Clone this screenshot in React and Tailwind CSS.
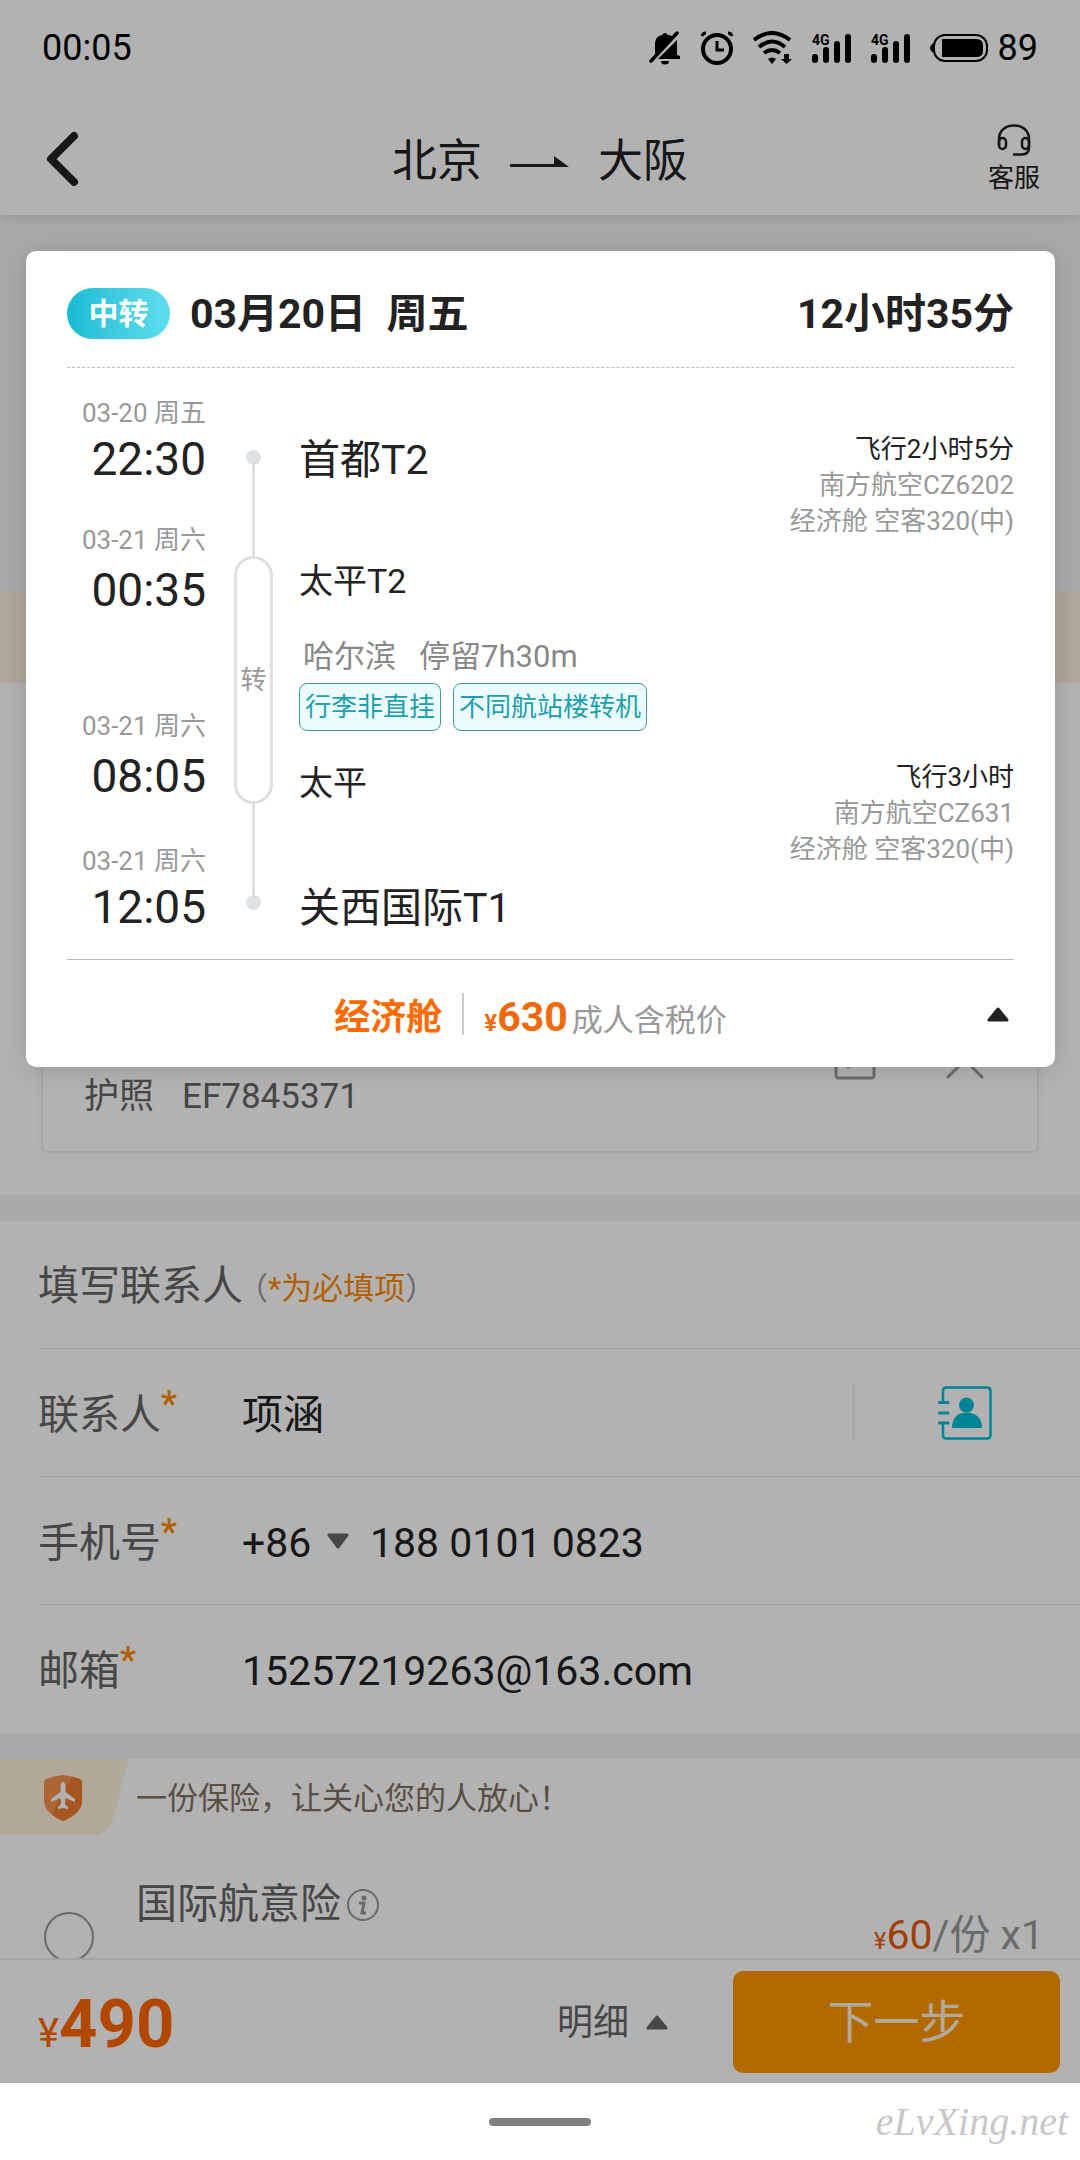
import React from "react";

function BellOff() {
  return (
    <svg width="32" height="34" viewBox="0 0 32 34" className="shrink-0">
      <path d="M6 23 V14 C6 7 9 5 13 4 Q16 0 19 4 Q22 4 24 6 Z" fill="#000" />
      <path d="M12 25 L28 9 V24 L31 25 V28 H9 Z" fill="#000" />
      <path d="M12 30 H20 A4 3.500 0 0 1 12 30 Z" fill="#000" />
      <path d="M2 30 L28 2" stroke="#000" strokeWidth="3.500" strokeLinecap="round" />
    </svg>
  );
}

function Alarm() {
  return (
    <svg width="34" height="34" viewBox="0 0 34 34" fill="none" stroke="#000" className="shrink-0">
      <circle cx="17" cy="18" r="14" strokeWidth="4" />
      <path d="M17 10 V19 H24" strokeWidth="3" />
      <path d="M2 5 Q3 2 6 2 M28 2 Q31 2 32 5" strokeWidth="3" />
    </svg>
  );
}

function Wifi() {
  return (
    <svg width="40" height="34" viewBox="0 0 40 34" fill="none" stroke="#000" className="shrink-0">
      <path d="M1 9 Q19 -5 37 9" strokeWidth="4" />
      <path d="M6 16 Q19 5 32 16" strokeWidth="4" />
      <path d="M11 22 Q19 16 27 22" strokeWidth="4" />
      <path d="M19 33 L15 28 Q19 25 23 28 Z" fill="#000" stroke="none" />
      <path d="M31 23 H36 V28 H39 L33.500 33 L28 28 H31 Z" fill="#000" stroke="none" />
    </svg>
  );
}

function Signal() {
  return (
    <svg width="40" height="34" viewBox="0 0 40 34" className="shrink-0">
      <text x="0" y="14" fontSize="14" fontWeight="700" fontFamily="Roboto, sans-serif">4G</text>
      <rect x="0" y="23" width="6" height="9" rx="3" />
      <rect x="11" y="16" width="6" height="16" rx="3" />
      <rect x="22" y="10" width="6" height="22" rx="3" />
      <rect x="33" y="3" width="6" height="29" rx="3" />
    </svg>
  );
}

function Battery() {
  return (
    <svg width="58" height="28" viewBox="0 0 58 28" className="shrink-0">
      <path d="M5 8 Q0 11 0 14 Q0 17 5 20 Z" />
      <rect x="4" y="1" width="53" height="26" rx="11" fill="none" stroke="#000" strokeWidth="2" />
      <path d="M12 5 H46 Q53 5 53 11 V17 Q53 23 46 23 H12 Z" />
    </svg>
  );
}

function Triangle({ down, className }) {
  return (
    <svg width="24" height="16" viewBox="0 0 24 16" className={className}>
      <path
        d={down ? "M3 2 H21 L12 14 Z" : "M3 14 H21 L12 3 Z"}
        fill="currentColor"
        stroke="currentColor"
        strokeWidth="3"
        strokeLinejoin="round"
      />
    </svg>
  );
}

function Headset() {
  return (
    <svg width="34" height="32" viewBox="0 0 34 32" fill="none" stroke="#222" strokeWidth="2.500">
      <path d="M2 21 V15 C2 7 8 1.500 17 1.500 C26 1.500 32 7 32 15 V23 Q32 30.500 25 30.500 H16" />
      <rect x="2" y="14" width="7" height="11" rx="3.500" />
      <rect x="25" y="14" width="7" height="11" rx="3.500" />
    </svg>
  );
}

function AddressBook() {
  return (
    <svg width="54" height="54" viewBox="0 0 54 54" fill="none" stroke="#00bcd4" strokeWidth="2.500" strokeLinecap="round">
      <path d="M5 16 V5 Q5 1.500 8 1.500 H49 Q52.500 1.500 52.500 5 V49 Q52.500 52.500 49 52.500 H8 Q5 52.500 5 49 V38" />
      <path d="M1.500 16.500 H10 M1.500 27 H10 M1.500 37 H10" strokeWidth="3" />
      <circle cx="28.500" cy="19" r="7.500" fill="#00bcd4" stroke="none" />
      <path d="M14 42 C14 31 20 26.500 28.500 26.500 C37 26.500 44 31 44 42 Z" fill="#00bcd4" stroke="none" />
    </svg>
  );
}

function Shield() {
  return (
    <svg width="38" height="46" viewBox="0 0 38 46" className="absolute left-11 top-4">
      <path d="M19 0 Q28 1 36 4 Q38 5 38 8 V26 Q38 38 19 46 Q0 38 0 26 V8 Q0 5 2 4 Q10 1 19 0 Z" fill="#f7924c" />
      <path d="M28 2 L36 4 Q38 5 38 8 V26 Q38 38 19 46 Q12 43 8 39 Z" fill="#ee7b30" />
      <path d="M19 7 Q21 7 21.500 11 V17 L31 24 V27 L21.500 23 L21 29 L24 32 V34 L19 33 L14 34 V32 L17 29 L16.500 23 L7 27 V24 L16.500 17 V11 Q17 7 19 7 Z" fill="#fff" />
    </svg>
  );
}

function Stop({ date, time, className, spaced }) {
  return (
    <div className={"flex flex-col items-end " + className}>
      <span className="text-[26px] leading-9 text-[#999]">{date}</span>
      <time className={"text-[46px] leading-14 " + (spaced ? "mt-1" : "")}>{time}</time>
    </div>
  );
}

function FlightInfo({ duration, flight, cabin }) {
  return (
    <div className="text-right text-[26px] leading-9 text-[#999]">
      <p className="text-[#222]">{duration}</p>
      <p>{flight}</p>
      <p>{cabin}</p>
    </div>
  );
}

function Chip({ children }) {
  return (
    <span className="flex h-12 items-center rounded-lg border border-[#3f9ca4] bg-[#ecfbfe] px-[5px] text-[26px] text-[#1fa0ad]">
      {children}
    </span>
  );
}

function TripCard() {
  return (
    <section
      role="dialog"
      aria-label="行程详情"
      className="absolute left-[26px] right-[25px] top-[251px] rounded-[10px] bg-white px-[41px] text-[#222] shadow-[0_2px_24px_rgba(0,0,0,0.14)]"
    >
      <header className="flex h-[117px] items-center border-b border-dashed border-[#bbb] pt-2">
        <span className="flex h-[51px] w-[103px] items-center justify-center rounded-full bg-linear-to-r from-[#14bcd3] to-[#5edcee] text-[30px] font-bold text-white">
          中转
        </span>
        <h2 className="ml-5 whitespace-pre pt-1 text-[41px] font-bold">03月20日  周五</h2>
        <span className="ml-auto pt-1 text-[41px] font-bold">12小时35分</span>
      </header>

      <div className="flex border-b border-[#bbb] pb-6">
        <div className="w-[139px] pt-[27px]">
          <Stop date="03-20 周五" time="22:30" className="" />
          <Stop date="03-21 周六" time="00:35" className="mt-[35px]" spaced />
          <Stop date="03-21 周六" time="08:05" className="mt-[90px]" spaced />
          <Stop date="03-21 周六" time="12:05" className="mt-[39px]" />
        </div>

        <div className="ml-7 flex w-[39px] flex-col items-center pt-[82px]">
          <i className="size-[15px] rounded-full bg-[#dde1e3]" />
          <i className="h-[91px] w-[3px] bg-[#dde1e3]" />
          <span className="flex h-[248px] w-[39px] items-center justify-center rounded-full border-[3px] border-[#dde1e3] text-[26px] text-[#999]">
            转
          </span>
          <i className="h-[91px] w-[3px] bg-[#dde1e3]" />
          <i className="size-[15px] rounded-full bg-[#dde1e3]" />
        </div>

        <div className="ml-[26px] flex-1 pt-[63px]">
          <div className="flex justify-between">
            <div>
              <p className="mt-1 text-[41px] leading-[50px]">首都T2</p>
              <p className="mt-[74px] text-[34px] leading-[44px]">太平T2</p>
            </div>
            <FlightInfo duration="飞行2小时5分" flight="南方航空CZ6202" cabin="经济舱 空客320(中)" />
          </div>
          <p className="mt-[34px] whitespace-pre pl-1 text-[31px] leading-10 text-[#888]">哈尔滨   停留7h30m</p>
          <div className="mt-1.5 flex gap-3">
            <Chip>行李非直挂</Chip>
            <Chip>不同航站楼转机</Chip>
          </div>
          <div className="mt-7 flex justify-between">
            <div>
              <p className="mt-0.5 text-[34px] leading-[44px]">太平</p>
              <p className="mt-[78px] text-[41px] leading-[50px]">关西国际T1</p>
            </div>
            <FlightInfo duration="飞行3小时" flight="南方航空CZ631" cabin="经济舱 空客320(中)" />
          </div>
        </div>
      </div>

      <footer className="relative flex h-[107px] items-center justify-center">
        <div className="mr-5 flex items-center">
          <span className="pt-2 text-4xl font-bold text-[#ff6a00]">经济舱</span>
          <i className="mx-5 h-[42px] w-0.5 bg-[#ccc]" />
          <p className="flex items-baseline pt-2 text-[31px] text-[#999]">
            <span className="text-2xl font-bold text-[#f0690f]">¥</span>
            <strong className="mr-1 text-[41px] text-[#f0690f]">630</strong>
            成人含税价
          </p>
        </div>
        <button type="button" aria-label="收起" className="absolute right-1 flex h-12 items-center">
          <Triangle className="text-[#222]" />
        </button>
      </footer>
    </section>
  );
}

function FormRow({ id, label, children, last }) {
  return (
    <div className={"ml-[38px] flex h-32 items-center text-[41px] " + (last ? "" : "border-b border-[#ebebeb]")}>
      <label htmlFor={id} className="flex w-[204px] items-center pt-1.5 text-[#666]">
        {label}
        <span className="-mt-6 text-4xl font-medium leading-10 text-[#ff8a00]">*</span>
      </label>
      {children}
    </div>
  );
}

export default function App() {
  return (
    <div
      className="flex min-h-screen w-full flex-col bg-white text-[#222]"
      style={{ fontFamily: 'Roboto, "Noto Sans CJK SC", sans-serif' }}
    >
      <div className="relative">
        <header className="relative h-[215px] shadow-[0_2px_14px_rgba(0,0,0,0.12)]">
          <div className="flex h-24 items-center px-[42px] text-4xl text-black">
            <span>00:05</span>
            <div className="ml-auto flex items-center gap-[19px]">
              <BellOff />
              <Alarm />
              <Wifi />
              <Signal />
              <Signal />
              <div className="flex items-center gap-2.5">
                <Battery />
                <span>89</span>
              </div>
            </div>
          </div>
          <div className="flex h-[119px] items-center justify-between px-10 pt-1.5">
            <button type="button" aria-label="返回" className="w-[52px]">
              <svg width="44" height="60" viewBox="0 0 44 60" fill="none" stroke="#222" strokeWidth="8" strokeLinecap="round" strokeLinejoin="round">
                <path d="M34 7 L11 30 L34 53" />
              </svg>
            </button>
            <h1 className="flex items-center pt-1.5 text-[45px]">
              北京
              <svg width="60" height="12" viewBox="0 0 60 12" className="mx-7">
                <path d="M0 8 H44 V0 L59 11 H0 Z" fill="#222" />
              </svg>
              大阪
            </h1>
            <button type="button" className="flex w-[52px] flex-col items-center gap-1.5 text-[26px] leading-8">
              <Headset />
              <span className="whitespace-nowrap">客服</span>
            </button>
          </div>
        </header>

        <div className="h-[376px] bg-[#f3f3f3]" />
        <div className="h-[92px] bg-[#fdeedb]" />

        <section className="px-[41px] pb-[42px] pt-6">
          <div className="h-[446px] rounded-lg border-2 border-t-0 border-[#ededed] px-[41px] pt-[330px] shadow-[0_4px_12px_rgba(0,0,0,0.04)]">
            <div className="flex justify-between text-[#666]">
              <p className="pt-[38px] text-[35px] leading-[44px]">
                护照<span className="ml-7">EF7845371</span>
              </p>
              <div className="flex h-[44px] items-center gap-[70px] pr-3">
                <button type="button" aria-label="编辑">
                  <svg width="42" height="42" viewBox="0 0 42 42" fill="none" stroke="#999" strokeWidth="3" strokeLinecap="round">
                    <path d="M24 2 H5 Q2 2 2 5 V37 Q2 40 5 40 H37 Q40 40 40 37 V18 M14 29 L36 6" />
                  </svg>
                </button>
                <button type="button" aria-label="删除">
                  <svg width="38" height="42" viewBox="0 0 38 42" fill="none" stroke="#999" strokeWidth="3" strokeLinecap="round">
                    <path d="M2 5 L36 39 M36 5 L2 39" />
                  </svg>
                </button>
              </div>
            </div>
          </div>
        </section>

        <div className="h-[26px] bg-[#f3f3f3]" />

        <form>
          <h2 className="ml-[38px] flex h-32 items-center border-b border-[#ebebeb] pt-1 text-[41px] text-[#666]">
            填写联系人
            <span className="-ml-1.5 pt-1.5 text-[31px] text-[#999]">
              （<span className="text-[#ff8a00]">*为必填项</span>）
            </span>
          </h2>
          <FormRow id="contact" label="联系人">
            <input id="contact" defaultValue="项涵" className="w-0 flex-1 pt-1.5 outline-none" />
            <i className="h-[57px] w-[3px] bg-[#ededed]" />
            <button type="button" aria-label="通讯录" className="ml-[83px] mr-[88px]">
              <AddressBook />
            </button>
          </FormRow>
          <FormRow id="phone" label="手机号">
            <span className="relative mr-5 flex items-center">
              <select aria-label="国家代码" className="w-[108px] appearance-none bg-transparent pt-1.5 outline-none">
                <option>+86</option>
              </select>
              <Triangle down className="pointer-events-none absolute right-0 text-[#666]" />
            </span>
            <input id="phone" type="tel" defaultValue="188 0101 0823" className="w-0 flex-1 pt-1.5 outline-none" />
          </FormRow>
          <FormRow id="email" label="邮箱" last>
            <input id="email" type="email" defaultValue="15257219263@163.com" className="w-0 flex-1 pt-1.5 outline-none" />
          </FormRow>
        </form>

        <div className="h-[26px] bg-[#f3f3f3]" />

        <section className="h-[199px] overflow-hidden">
          <div className="relative flex h-[76px] items-center">
            <svg width="128" height="76" viewBox="0 0 128 76" className="shrink-0">
              <path d="M0 0 H128 L114 56 Q109 76 94 76 H0 Z" fill="#fff1d8" />
            </svg>
            <Shield />
            <p className="ml-2 pt-1 text-[31px] text-[#82705f]">一份保险，让关心您的人放心！</p>
          </div>
          <div className="flex items-start pl-11 pr-9 pt-9">
            <input
              type="radio"
              aria-label="国际航意险"
              className="mt-[41px] size-[50px] shrink-0 appearance-none rounded-full border-2 border-[#999]"
            />
            <div className="ml-[42px] flex h-[68px] items-center text-[41px] text-[#666]">
              国际航意险
              <button type="button" aria-label="保险说明" className="ml-1.5">
                <svg width="32" height="32" viewBox="0 0 32 32" fill="none" stroke="#999" strokeWidth="2">
                  <circle cx="16" cy="16" r="15" />
                  <circle cx="17" cy="9" r="2.500" fill="#999" stroke="none" />
                  <path d="M12 14 H17 L15 24 H19" strokeWidth="3" />
                </svg>
              </button>
            </div>
            <p className="ml-auto flex items-baseline pt-[42px] text-[41px] leading-[44px] text-[#999]">
              <span className="text-2xl leading-8 text-[#e8590c]">¥</span>
              <span className="text-[#e8590c]">60</span>/份 x1
            </p>
          </div>
        </section>

        <footer className="flex h-[125px] items-center border-t-2 border-[#ebebeb] pl-[38px] pr-5">
          <p className="flex items-baseline pt-1 text-[#ff6600]">
            <span className="text-[40px]">¥</span>
            <strong className="text-[67px] leading-[80px]">490</strong>
          </p>
          <button type="button" className="ml-auto flex items-center gap-4 text-4xl text-[#666]">
            <span className="pt-0.5">明细</span>
            <Triangle />
          </button>
          <button type="button" className="ml-16 h-[102px] w-[327px] rounded-[10px] bg-[#ff9800] pt-0.5 text-[46px] text-[#fff3dd]">
            下一步
          </button>
        </footer>

        <div className="absolute inset-0 bg-black/30" />
        <TripCard />
      </div>

      <div className="relative flex h-[77px] items-center justify-center">
        <i className="h-2 w-[102px] rounded-full bg-[#808080]" />
        <span className="absolute right-3 font-['Liberation_Serif'] text-[40px] italic text-[#c8c8c8]">eLvXing.net</span>
      </div>
    </div>
  );
}
